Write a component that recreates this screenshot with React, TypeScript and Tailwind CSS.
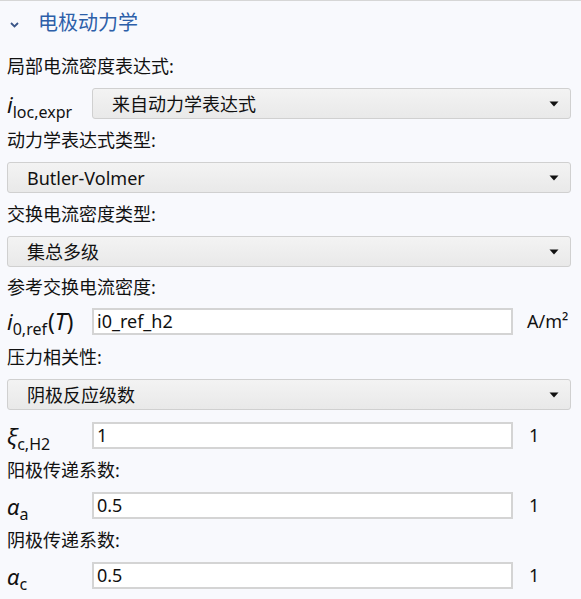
import React from "react";

const font = { fontFamily: '"Noto Sans", "Noto Sans CJK SC", sans-serif' };

function Arrow() {
  return (
    <svg width="10" height="6" viewBox="0 0 10 6" className="shrink-0">
      <path d="M0.5 0.5 L9.5 0.5 L5 5.5 Z" fill="#111" />
    </svg>
  );
}

function Select({ text, className = "" }: { text: string; className?: string }) {
  return (
    <div
      className={
        "h-[31px] flex items-center justify-between rounded-[3px] border border-[#d0d0d0] bg-gradient-to-b from-[#f3f3f3] to-[#e9e9e9] pl-[19px] pr-[11px] text-[18px] text-[#111] " +
        className
      }
    >
      <span className="leading-none">{text}</span>
      <Arrow />
    </div>
  );
}

function Label({ text, h }: { text: string; h: string }) {
  return (
    <div className={"flex items-center text-[18px] text-[#111] " + h}>
      <span>{text}</span>
    </div>
  );
}

function Input({ value }: { value: string }) {
  return (
    <div className="h-[27px] w-[421px] border-2 border-[#d4d4d4] bg-white flex items-center pl-[3px] text-[18px] text-[#111]">
      {value}
    </div>
  );
}

function Sym({ main, sub, extra }: { main: string; sub: string; extra?: React.ReactNode }) {
  return (
    <div className="w-[85px] shrink-0 flex items-baseline text-[#111]">
      <span className="italic text-[22px] leading-none">{main}</span>
      <span className="text-[16px] leading-none relative top-[5px]">{sub}</span>
      {extra}
    </div>
  );
}

export default function App() {
  return (
    <div className="w-[581px] h-[599px] bg-[#f8f9fd] border-t border-[#d6d6d6] overflow-hidden" style={font}>
      <div className="h-[44px] flex items-center pl-[10px]">
        <svg width="9" height="6" viewBox="0 0 9 6" className="mt-[3px]">
          <path d="M1 1 L4.5 4.5 L8 1" fill="none" stroke="#3b5688" strokeWidth="1.8" />
        </svg>
        <span className="ml-[19px] text-[20px] text-[#2d5fa9] leading-none">电极动力学</span>
      </div>
      <div className="pl-[7px] pr-[10px] flex flex-col">
        <Label text="局部电流密度表达式:" h="h-[43px]" />
        <div className="flex items-center">
          <Sym main="i" sub="loc,expr" />
          <Select text="来自动力学表达式" className="flex-1" />
        </div>
        <Label text="动力学表达式类型:" h="h-[43px]" />
        <Select text="Butler-Volmer" />
        <Label text="交换电流密度类型:" h="h-[43px]" />
        <Select text="集总多级" />
        <Label text="参考交换电流密度:" h="h-[41px]" />
        <div className="flex items-center">
          <Sym
            main="i"
            sub="0,ref"
            extra={
              <span className="text-[23px] leading-none ml-[1px]">
                (<span className="italic">T</span>)
              </span>
            }
          />
          <Input value="i0_ref_h2" />
          <span className="ml-[14px] text-[18px] text-[#111]">A/m²</span>
        </div>
        <Label text="压力相关性:" h="h-[44px]" />
        <Select text="阴极反应级数" />
        <div className="h-[12px]" />
        <div className="flex items-center">
          <Sym main="ξ" sub="c,H2" />
          <Input value="1" />
          <span className="ml-[16px] text-[18px] text-[#111]">1</span>
        </div>
        <Label text="阳极传递系数:" h="h-[43px]" />
        <div className="flex items-center">
          <Sym main="α" sub="a" />
          <Input value="0.5" />
          <span className="ml-[16px] text-[18px] text-[#111]">1</span>
        </div>
        <Label text="阴极传递系数:" h="h-[43px]" />
        <div className="flex items-center">
          <Sym main="α" sub="c" />
          <Input value="0.5" />
          <span className="ml-[16px] text-[18px] text-[#111]">1</span>
        </div>
      </div>
    </div>
  );
}
